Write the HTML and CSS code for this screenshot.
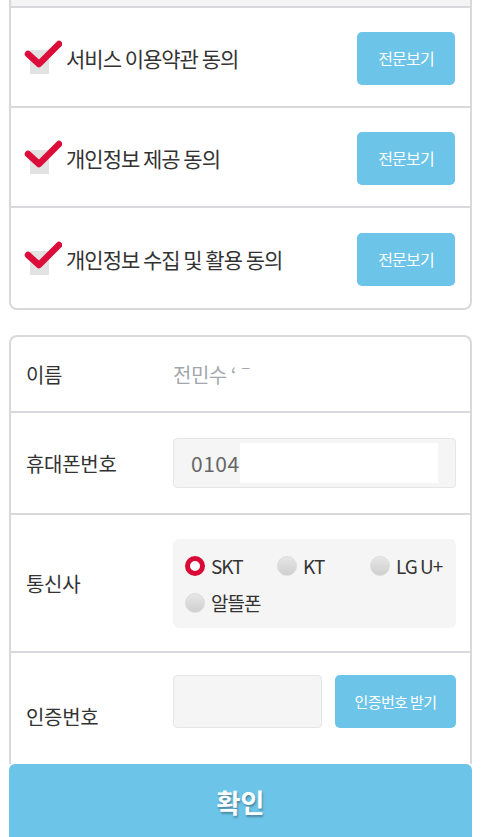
FILE: index.html
```html
<!DOCTYPE html>
<html>
<head>
    <title>본인인증</title>
    <link rel="stylesheet" href="styles.css">
</head>
<body>
    <div id="page">
        <div class="card agree">
            <div class="strip"></div>
            <div class="agree-row">
                <label class="check">
                    <svg width="38" height="36" viewBox="0 0 38 36"><rect x="6" y="10" width="19" height="24" fill="#e2e2e2"/><polyline points="4,14 15,24 35,4" fill="none" stroke="#dc0d3a" stroke-width="6.5" stroke-linecap="round" stroke-linejoin="round"/></svg>
                    <span>서비스 이용약관 동의</span>
                </label>
                <button class="button view">전문보기</button>
            </div>
            <div class="agree-row">
                <label class="check">
                    <svg width="38" height="36" viewBox="0 0 38 36"><rect x="6" y="10" width="19" height="24" fill="#e2e2e2"/><polyline points="4,14 15,24 35,4" fill="none" stroke="#dc0d3a" stroke-width="6.5" stroke-linecap="round" stroke-linejoin="round"/></svg>
                    <span>개인정보 제공 동의</span>
                </label>
                <button class="button view">전문보기</button>
            </div>
            <div class="agree-row last">
                <label class="check">
                    <svg width="38" height="36" viewBox="0 0 38 36"><rect x="6" y="10" width="19" height="24" fill="#e2e2e2"/><polyline points="4,14 15,24 35,4" fill="none" stroke="#dc0d3a" stroke-width="6.5" stroke-linecap="round" stroke-linejoin="round"/></svg>
                    <span>개인정보 수집 및 활용 동의</span>
                </label>
                <button class="button view">전문보기</button>
            </div>
        </div>

        <div class="card form">
            <div class="form-row name">
                <div class="label">이름</div>
                <div class="value">전민수 ‘ˉ</div>
            </div>
            <div class="form-row phone">
                <div class="label">휴대폰번호</div>
                <div class="field">0104<span class="mask"></span></div>
            </div>
            <div class="form-row carrier">
                <div class="label">통신사</div>
                <div class="radios">
                    <div class="radio"><span class="dot on"></span>SKT</div>
                    <div class="radio"><span class="dot"></span>KT</div>
                    <div class="radio"><span class="dot"></span>LG U+</div>
                    <div class="radio"><span class="dot"></span>알뜰폰</div>
                </div>
            </div>
            <div class="form-row code">
                <div class="label">인증번호</div>
                <div class="field small"></div>
                <button class="button send">인증번호 받기</button>
            </div>
        </div>
        <button class="confirm">확인</button>
    </div>
</body>
</html>
```

FILE: styles.css
```css
body {
    margin: 0;
    background-color: #fff;
    font-family: "Noto Sans CJK KR", "Noto Sans", sans-serif;
    color: #333;
}
#page {
    padding: 0 13px 0 9px;
}
.card {
    border: 2px solid #d9d9dd;
    background-color: #fff;
}
.agree {
    border-top: none;
    border-radius: 0 0 8px 8px;
}
.strip {
    height: 6px;
    background-color: #f4f4f4;
    border-bottom: 2px solid #d9d9dd;
}
.agree-row {
    display: flex;
    align-items: center;
    justify-content: space-between;
    height: 98px;
    padding: 0 15px 0 13px;
    border-bottom: 2px solid #d9d9dd;
}
.agree-row.last {
    height: 100px;
    border-bottom: none;
}
.check {
    display: flex;
    align-items: center;
    font-size: 21px;
    letter-spacing: -1px;
}
.check svg {
    margin-right: 4px;
    margin-top: 2px;
}
.check span {
    margin-top: 2px;
}
.button {
    border: none;
    border-radius: 5px;
    background-color: #6cc4e8;
    color: #fff;
    font-family: "Noto Sans CJK KR", sans-serif;
    cursor: pointer;
}
.view {
    width: 98px;
    height: 53px;
    font-size: 16px;
    letter-spacing: -0.8px;
    margin-top: 2px;
}
.form {
    margin-top: 25px;
    border-bottom: none;
    border-radius: 8px 8px 0 0;
}
.form-row {
    display: flex;
    align-items: center;
    padding: 0 14px 0 15px;
    border-bottom: 2px solid #d9d9dd;
}
.label {
    width: 147px;
    flex-shrink: 0;
    font-size: 20px;
    letter-spacing: -0.3px;
}
.name {
    height: 74px;
}
.value {
    font-size: 20px;
    color: #a3a7ad;
    letter-spacing: -0.5px;
}
.phone {
    height: 100px;
}
.field {
    flex: 1;
    height: 50px;
    box-sizing: border-box;
    background-color: #f5f5f5;
    border: 1px solid #e6e6e6;
    border-radius: 4px;
    display: flex;
    align-items: center;
    padding-left: 17px;
    font-size: 21px;
    color: #666;
    letter-spacing: 0.5px;
}
.mask {
    display: inline-block;
    width: 198px;
    height: 40px;
    background-color: #fff;
}
.carrier {
    height: 136px;
}
.radios {
    flex: 1;
    height: 89px;
    box-sizing: border-box;
    background-color: #f5f5f5;
    border-radius: 6px;
    padding: 17px 0 0 12px;
    display: grid;
    grid-template-columns: 92px 93px auto;
    align-content: start;
    row-gap: 17px;
}
.radio {
    height: 20px;
    display: flex;
    align-items: center;
    font-size: 19px;
    letter-spacing: -1px;
    color: #333;
}
.dot {
    width: 20px;
    height: 20px;
    box-sizing: border-box;
    border-radius: 50%;
    background: linear-gradient(#e6e6e6, #cfcfcf);
    border: 1px solid #dcdcdc;
    margin-right: 6px;
    flex-shrink: 0;
}
.dot.on {
    background: #fff;
    border: 5px solid #d90a35;
}
.code {
    height: 111px;
    align-items: flex-start;
    padding-top: 22px;
    box-sizing: border-box;
    border-bottom: none;
}
.code .label {
    padding-top: 27px;
}
.field.small {
    flex: none;
    width: 149px;
    height: 53px;
}
.send {
    width: 122px;
    height: 53px;
    margin-left: 13px;
    font-size: 15px;
    letter-spacing: -0.6px;
}
.confirm {
    display: block;
    width: 100%;
    height: 80px;
    border: none;
    border-radius: 6px 6px 0 0;
    background-color: #6cc4e8;
    color: #fff;
    font-family: "Noto Sans CJK KR", sans-serif;
    font-size: 26px;
    font-weight: bold;
    text-shadow: 1px 2px 2px rgba(0, 0, 0, 0.3);
    padding-bottom: 6px;
}
```
